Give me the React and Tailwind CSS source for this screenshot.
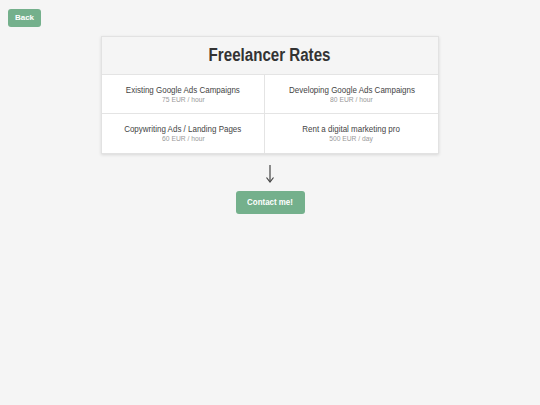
import React from 'react';

const rates = [
  { name: 'Existing Google Ads Campaigns', price: '75 EUR / hour' },
  { name: 'Developing Google Ads Campaigns', price: '80 EUR / hour' },
  { name: 'Copywriting Ads / Landing Pages', price: '60 EUR / hour' },
  { name: 'Rent a digital marketing pro', price: '500 EUR / day' },
];

// reference uses a condensed Helvetica; squeeze Liberation Sans to match
const App = () => {
  return (
    <div className="min-h-[405px] bg-[#f5f5f5] font-['Liberation_Sans',Arial,sans-serif] text-[#333]">
      <div className="flex px-2 pt-[9px]">
        <button className="h-[18px] w-[33px] rounded-[3px] bg-[#74b08c] text-[8px] font-bold text-white">
          Back
        </button>
      </div>

      <div className="mx-auto mt-[9px] w-[338px] border border-[#e2e2e2] bg-white shadow-[0_1px_3px_rgba(0,0,0,0.12)]">
        <div className="flex h-[38px] items-center justify-center border-b border-[#e4e4e4] bg-[#f5f5f5]">
          <h1 className="scale-x-[0.84] text-[18px] font-bold text-[#333]">Freelancer Rates</h1>
        </div>
        <div className="grid grid-cols-[163px_1fr]">
          {rates.map((r, i) => (
            <div
              key={r.name}
              className={`flex h-[39px] flex-col items-center justify-center ${i % 2 === 0 ? 'border-r border-[#e4e4e4]' : ''} ${i < 2 ? 'border-b border-[#e4e4e4]' : ''}`}
            >
              <p className="scale-x-[0.84] whitespace-nowrap text-[9.5px] leading-[11px] text-[#444]">{r.name}</p>
              <p className="scale-x-[0.84] whitespace-nowrap text-[8px] leading-[10px] text-[#999]">{r.price}</p>
            </div>
          ))}
        </div>
      </div>

      <div className="mt-[11px] flex flex-col items-center">
        <svg width="10" height="18" viewBox="0 0 10 18" className="text-[#444]">
          <path d="M5 0 V16" stroke="currentColor" strokeWidth="1.2" fill="none" />
          <path d="M1.5 12.5 L5 17 L8.5 12.5" stroke="currentColor" strokeWidth="1.2" fill="none" />
        </svg>
        <button className="mt-[8px] h-[23px] w-[69px] rounded-[3px] bg-[#74b08c] text-[9px] font-bold text-white">
          <span className="inline-block scale-x-[0.88]">Contact me!</span>
        </button>
      </div>
    </div>
  );
};

export default App;
